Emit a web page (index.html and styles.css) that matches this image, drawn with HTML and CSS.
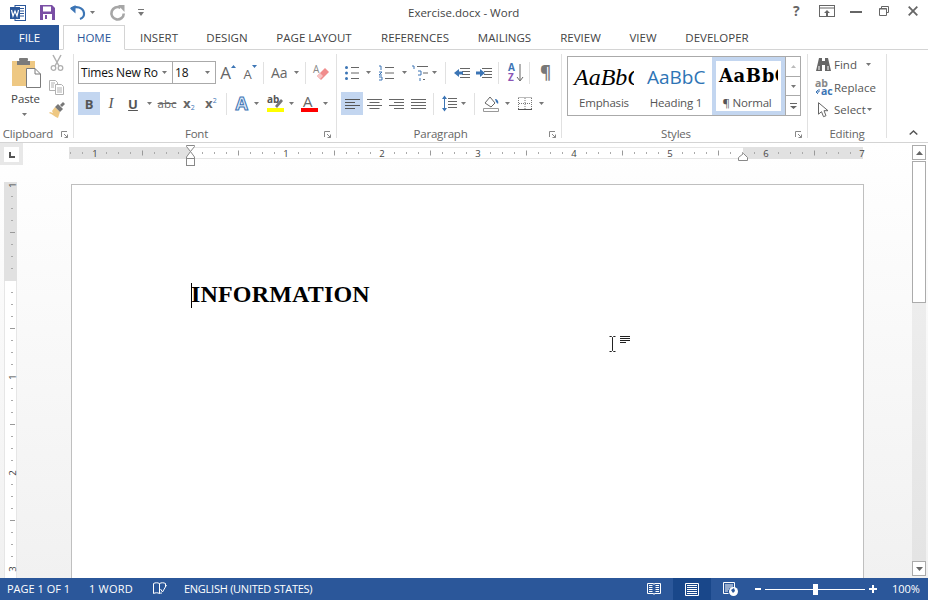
FILE: index.html
```html
<!DOCTYPE html>
<html lang="en">
<head>
<meta charset="utf-8">
<title>Exercise.docx - Word</title>
<link rel="stylesheet" href="styles.css">
</head>
<body>
<div class="app">
  <header class="titlebar">
    <div class="qat">
      <svg class="i16 m-l10" viewBox="0 0 16 16"><rect x="5" y="0.5" width="10.500" height="15" fill="#fff" stroke="#2b579a"/><path d="M9 3.500h5M9 6h5M9 8.500h5M9 11h5" stroke="#2b579a"/><rect x="0" y="2" width="10" height="12" fill="#2b579a"/><path d="M1.500 5l1.500 6 2-5 2 5 1.500-6" fill="none" stroke="#fff" stroke-width="1.200"/></svg>
      <svg class="i15 m-l14" viewBox="0 0 15 15"><path d="M0 0h12l3 3v12H0z" fill="#7a4fa5"/><rect x="3" y="1.500" width="8" height="5" fill="#fff"/><rect x="3" y="9" width="9" height="6" fill="#fff"/><rect x="5" y="10" width="2" height="4" fill="#7a4fa5"/></svg>
      <svg class="i15 m-l15" viewBox="0 0 15 15"><path d="M1 3.500C6 1 13 2 14 8c.3 2.500-1 5-4 6" fill="none" stroke="#3c75b5" stroke-width="2.200"/><path d="M0 3.500L5.500 0v8.500z" fill="#3c75b5"/></svg>
      <svg class="caret m-l5" viewBox="0 0 5 3"><path d="M0 0h5L2.500 3z"/></svg>
      <svg class="i15 m-l15" viewBox="0 0 15 15"><path d="M10.500 2.800A6.200 6.200 0 1 0 13.800 8.500" fill="none" stroke="#a6a6a6" stroke-width="2.600"/><path d="M8 0h6.500v7z" fill="#a6a6a6"/></svg>
      <svg class="customize m-l13" viewBox="0 0 6 7"><path d="M0 0h6v1H0zM0 3h6L3 7z" fill="#777"/></svg>
    </div>
    <div class="doc-title">Exercise.docx - Word</div>
    <div class="winctl">
      <span class="help">?</span>
      <svg class="ctl-display" viewBox="0 0 16 12"><rect x="0.500" y="0.500" width="15" height="11" fill="none" stroke="#666"/><path d="M1 3h14" stroke="#666"/><path d="M8 5l-3 3h2v3h2V8h2z" fill="#666"/></svg>
      <svg class="ctl-min" viewBox="0 0 12 2"><rect width="12" height="2" fill="#666"/></svg>
      <svg class="ctl-restore" viewBox="0 0 10 10"><path d="M2.500 2.500V.5h7v6h-2M.5 2.500h7v7h-7z" fill="none" stroke="#666"/><path d="M.5 3h7" stroke="#666"/></svg>
      <svg class="ctl-close" viewBox="0 0 10 10"><path d="M.7.7l8.600 8.600M9.300.7L.7 9.300" stroke="#666" stroke-width="1.800"/></svg>
    </div>
  </header>

  <nav class="tabs">
    <span class="tab file">FILE</span>
    <span class="tab home">HOME</span>
    <span class="tab">INSERT</span>
    <span class="tab">DESIGN</span>
    <span class="tab">PAGE LAYOUT</span>
    <span class="tab">REFERENCES</span>
    <span class="tab">MAILINGS</span>
    <span class="tab">REVIEW</span>
    <span class="tab">VIEW</span>
    <span class="tab">DEVELOPER</span>
  </nav>

  <section class="ribbon">
    <div class="group g-clip">
      <div class="tools clip-tools">
        <div class="paste">
          <svg class="paste-icon" viewBox="0 0 30 30"><path d="M1 3h23v25H1z" fill="#eec883"/><rect x="8" y="0" width="9" height="3" rx="1" fill="#7b7b7b"/><rect x="6" y="3" width="13" height="4" fill="#7b7b7b"/><path d="M15.500 10.500H24l5.500 5.500v13.500h-14z" fill="#fff" stroke="#7b7b7b"/><path d="M24 10.500v5.500h5.500" fill="none" stroke="#7b7b7b"/></svg>
          <span class="paste-label">Paste</span>
          <svg class="caret paste-caret" viewBox="0 0 5 3"><path d="M0 0h5L2.500 3z"/></svg>
        </div>
        <div class="clip-small">
          <svg class="i-cut" viewBox="0 0 14 16"><path d="M3 0l6 11M11 0L5 11" stroke="#b0b0b0" stroke-width="1.500" fill="none"/><circle cx="3.500" cy="13" r="2.300" fill="none" stroke="#b0b0b0" stroke-width="1.300"/><circle cx="10.500" cy="13" r="2.300" fill="none" stroke="#b0b0b0" stroke-width="1.300"/></svg>
          <svg class="i-copy" viewBox="0 0 15 15"><path d="M.5.500h6l2 2v8h-8z" fill="#fff" stroke="#b0b0b0"/><path d="M6.500 4.500h6l2 2v8h-8z" fill="#fff" stroke="#b0b0b0"/><path d="M2 3h4M2 5h3M2 7h3M8 8h5M8 10h5M8 12h5" stroke="#b0b0b0"/></svg>
          <svg class="i-paint" viewBox="0 0 16 16"><path d="M6 5l5 5-2 6c-3-1-6-4-9-5l1-1 3 1-1-2z" fill="#eec883"/><path d="M6 5l3-3 5 5-3 3z" fill="#777"/><path d="M11 3l3-3 2 2-3 3z" fill="#777"/></svg>
        </div>
      </div>
      <div class="glabel has-launcher">Clipboard<svg class="launcher" viewBox="0 0 7 7"><path d="M.5 6V.5H6M3 3l3.500 3.500M6.500 3.500v3h-3" fill="none" stroke="#888"/></svg></div>
    </div>

    <div class="group g-font">
      <div class="tools">
        <div class="row">
          <div class="combo w95"><span class="combo-text font-name">Times New Ro</span><svg class="caret" viewBox="0 0 5 3"><path d="M0 0h5L2.500 3z"/></svg></div>
          <div class="combo w44"><span class="combo-text size-val">18</span><svg class="caret" viewBox="0 0 5 3"><path d="M0 0h5L2.500 3z"/></svg></div>
          <span class="cell w24"><span class="grow-a big">A</span><svg class="tiny-up" viewBox="0 0 5 3"><path d="M0 3h5L2.500 0z"/></svg></span>
          <span class="cell w20"><span class="grow-a small">A</span><svg class="tiny-up" viewBox="0 0 5 3"><path d="M0 0h5L2.500 3z"/></svg></span>
          <span class="sep ml3 mr7"></span>
          <span class="aa">Aa</span>
          <svg class="caret ml3" viewBox="0 0 5 3"><path d="M0 0h5L2.500 3z"/></svg>
          <span class="sep ml6 mr7"></span>
          <svg class="i-eraser" viewBox="0 0 17 17"><path d="M8 16l8-8-4-4-8 8z" fill="#f08c8c"/><path d="M7 15l-3-3 3-3 3 3z" fill="#f7c4c4"/><text x="0" y="9" class="svg-a">A</text></svg>
        </div>
        <div class="row row2">
          <span class="cell w22 on b-btn">B</span>
          <span class="cell w22 i-btn">I</span>
          <span class="cell w22 u-btn">U</span>
          <svg class="caret ml3 mr5" viewBox="0 0 5 3"><path d="M0 0h5L2.500 3z"/></svg>
          <span class="abc">abc</span>
          <span class="xs ml6"><b>x</b><sub>2</sub></span>
          <span class="xs ml9"><b>x</b><sup>2</sup></span>
          <span class="sep ml8 mr8"></span>
          <svg class="i-texteffect" viewBox="0 0 16 17"><text x="0.500" y="15" class="svg-effect">A</text></svg>
          <svg class="caret ml3" viewBox="0 0 5 3"><path d="M0 0h5L2.500 3z"/></svg>
          <svg class="i-hl ml8" viewBox="0 0 17 17"><text x="0" y="8" class="svg-ab">ab</text><path d="M8 11l6-7 2 2-6 7z" fill="#777"/><rect y="13" width="17" height="4" fill="#ff0"/></svg>
          <svg class="caret ml5" viewBox="0 0 5 3"><path d="M0 0h5L2.500 3z"/></svg>
          <svg class="i-hl ml7" viewBox="0 0 17 17"><text x="2" y="12" class="svg-redA">A</text><rect y="13" width="17" height="4" fill="#f00"/></svg>
          <svg class="caret ml5" viewBox="0 0 5 3"><path d="M0 0h5L2.500 3z"/></svg>
        </div>
      </div>
      <div class="glabel has-launcher">Font<svg class="launcher" viewBox="0 0 7 7"><path d="M.5 6V.5H6M3 3l3.500 3.500M6.500 3.500v3h-3" fill="none" stroke="#888"/></svg></div>
    </div>

    <div class="group g-para">
      <div class="tools">
        <div class="row">
          <svg class="i-para ml8" viewBox="0 0 14 15"><g fill="#3c75b5"><circle cx="1.500" cy="2.500" r="1.500"/><circle cx="1.500" cy="8" r="1.500"/><circle cx="1.500" cy="13.500" r="1.500"/></g><path d="M6 2.500h8M6 8h8M6 13.500h8" stroke="#666"/></svg>
          <svg class="caret ml7" viewBox="0 0 5 3"><path d="M0 0h5L2.500 3z"/></svg>
          <svg class="i-para16 ml7" viewBox="0 0 16 16"><path d="M1 1h2v4M1 7h3L1 10h3M1 12h3v3H1" fill="none" stroke="#3c75b5"/><path d="M7 2.500h9M7 8h9M7 13.500h9" stroke="#666"/></svg>
          <svg class="caret ml8" viewBox="0 0 5 3"><path d="M0 0h5L2.500 3z"/></svg>
          <svg class="i-para17 ml4" viewBox="0 0 17 16"><path d="M1 1h2v3" fill="none" stroke="#3c75b5"/><path d="M6 1.500h11M12 8h5M12 14.500h2" stroke="#666"/><path d="M7 6h3v4H7M9 13v3" fill="none" stroke="#3c75b5"/></svg>
          <svg class="caret ml4" viewBox="0 0 5 3"><path d="M0 0h5L2.500 3z"/></svg>
          <span class="sep ml8 mr8"></span>
          <svg class="i-para16" viewBox="0 0 16 12"><path d="M6 1.500h10M8 4.500h8M8 7.500h8M6 10.500h10" stroke="#666"/><path d="M0 6l5-4v2.500h4v3H5V10z" fill="#3c75b5"/></svg>
          <svg class="i-para16 ml6" viewBox="0 0 16 12"><path d="M6 1.500h10M8 4.500h8M8 7.500h8M6 10.500h10" stroke="#666"/><path d="M9 6L4 2v2.500H0v3h4V10z" fill="#3c75b5"/></svg>
          <span class="sep ml6 mr9"></span>
          <svg class="i-sort" viewBox="0 0 15 19"><text x="0" y="8" class="svg-az blue">A</text><text x="0" y="17.500" class="svg-az purple">Z</text><path d="M12 1v16M9 14l3 4 3-4" fill="none" stroke="#666"/></svg>
          <span class="sep ml6 mr8"></span>
          <span class="pilcrow ml2">¶</span>
        </div>
        <div class="row row2">
          <span class="cell w22 ml4 on"><svg class="i-align" viewBox="0 0 15 12"><path d="M0 1.500h15M0 4.500h10M0 7.500h15M0 10.500h10" stroke="#555"/></svg></span>
          <span class="cell w22"><svg class="i-align" viewBox="0 0 15 12"><path d="M0 1.500h15M2.500 4.500h10M0 7.500h15M2.500 10.500h10" stroke="#666"/></svg></span>
          <span class="cell w22"><svg class="i-align" viewBox="0 0 15 12"><path d="M0 1.500h15M5 4.500h10M0 7.500h15M5 10.500h10" stroke="#666"/></svg></span>
          <span class="cell w22"><svg class="i-align" viewBox="0 0 15 12"><path d="M0 1.500h15M0 4.500h15M0 7.500h15M0 10.500h15" stroke="#666"/></svg></span>
          <span class="sep ml4 mr8"></span>
          <svg class="i-lines" viewBox="0 0 15 17"><path d="M6 3.500h9M6 6.500h9M6 9.500h9M6 12.500h9" stroke="#666"/><path d="M0 4l2.500-3.500L5 4zM0 13l2.500 3.500L5 13z" fill="#3c75b5"/><path d="M2.500 2v13" stroke="#3c75b5"/></svg>
          <svg class="caret ml4" viewBox="0 0 5 3"><path d="M0 0h5L2.500 3z"/></svg>
          <span class="sep ml8 mr8"></span>
          <svg class="i-para16h" viewBox="0 0 16 16"><path d="M2 7l5-6 5 6-4 4z" fill="#fff" stroke="#666"/><path d="M12 3c2 0 4 2 3 5l-2-2z" fill="#3c75b5"/><path d="M.5 12.500h15v3H.5z" fill="#fff" stroke="#999"/></svg>
          <svg class="caret ml6" viewBox="0 0 5 3"><path d="M0 0h5L2.500 3z"/></svg>
          <svg class="i-border ml8" viewBox="0 0 14 13"><path d="M.5 1v11M13.500 1v11M.5.500h13M7 1v11M1 6.500h12" stroke="#777" stroke-dasharray="1 1" fill="none"/><path d="M0 12.500h14" stroke="#555"/></svg>
          <svg class="caret ml7" viewBox="0 0 5 3"><path d="M0 0h5L2.500 3z"/></svg>
        </div>
      </div>
      <div class="glabel has-launcher">Paragraph<svg class="launcher" viewBox="0 0 7 7"><path d="M.5 6V.5H6M3 3l3.500 3.500M6.500 3.500v3h-3" fill="none" stroke="#888"/></svg></div>
    </div>

    <div class="group g-styles">
      <div class="gallery">
        <div class="style-item"><div class="preview p-em">AaBbC</div><div class="style-name">Emphasis</div></div>
        <div class="style-item"><div class="preview p-h1">AaBbC</div><div class="style-name">Heading 1</div></div>
        <div class="style-item selected"><div class="preview p-normal">AaBbC</div><div class="style-name">¶ Normal</div></div>
        <div class="gallery-scroll">
          <span class="gs-btn"><svg class="caret light" viewBox="0 0 5 3"><path d="M0 3h5L2.500 0z"/></svg></span>
          <span class="gs-btn"><svg class="caret" viewBox="0 0 5 3"><path d="M0 0h5L2.500 3z"/></svg></span>
          <span class="gs-btn"><svg class="more" viewBox="0 0 7 6"><path d="M0 0h7v1H0zM0 3h7L3.500 6z" fill="#666"/></svg></span>
        </div>
      </div>
      <div class="glabel has-launcher">Styles<svg class="launcher" viewBox="0 0 7 7"><path d="M.5 6V.5H6M3 3l3.500 3.500M6.500 3.500v3h-3" fill="none" stroke="#888"/></svg></div>
    </div>

    <div class="group g-edit">
      <div class="edit-list">
        <div class="edit-row"><span class="edit-ico"><svg class="i-bino" viewBox="0 0 15 13"><path d="M3 0h3v3h3V0h3l3 13H9V7H6v6H0z" fill="#666"/><path d="M3 8v4M12 8v4" stroke="#fff"/></svg></span><span>Find</span><svg class="caret ml9" viewBox="0 0 5 3"><path d="M0 0h5L2.500 3z"/></svg></div>
        <div class="edit-row"><span class="edit-ico"><svg class="i-repl" viewBox="0 0 17 15"><text x="0" y="7" class="svg-repl grey">ab</text><text x="6" y="14.500" class="svg-repl blue2">ac</text><path d="M4 9v3H1M3 10l-2 2 2 2" fill="none" stroke="#3c75b5"/></svg></span><span>Replace</span></div>
        <div class="edit-row"><span class="edit-ico"><svg class="i-sel" viewBox="0 0 11 15"><path d="M.5.700v11.500l3-2.500 2 5 2.500-1-2-5h4z" fill="#fff" stroke="#666"/></svg></span><span>Select</span><svg class="caret ml1" viewBox="0 0 5 3"><path d="M0 0h5L2.500 3z"/></svg></div>
      </div>
      <div class="glabel">Editing</div>
    </div>
    <div class="collapse"><svg class="chev" viewBox="0 0 9 5"><path d="M.7 4.500L4.500 1l3.800 3.500" fill="none" stroke="#555" stroke-width="1.500"/></svg></div>
  </section>

  <div class="main">
    <div class="doc-area">
      <div class="ruler-row">
        <span class="tab-stop"><span class="tab-stop-in"><svg class="l-stop" viewBox="0 0 6 6"><path d="M0 0h2v4h4v2H0z" fill="#555"/></svg></span></span>
        <svg class="hruler" viewBox="0 0 795 22" aria-label="ruler">
          <defs>
            <pattern id="ht" x="25" y="0" width="96" height="22" patternUnits="userSpaceOnUse">
              <path d="M12.500 9v2M24.500 9v2M36.500 9v2M60.500 9v2M72.500 9v2M84.500 9v2" stroke="#aaa"/>
              <path d="M48.500 7.500v5" stroke="#999"/>
            </pattern>
          </defs>
          <rect x="0" y="4" width="794" height="12" fill="#fff"/>
          <rect x="0" y="4" width="121" height="12" fill="#e1e1e1"/>
          <rect x="674" y="4" width="120" height="12" fill="#e1e1e1"/>
          <rect x="0" y="4" width="794" height="12" fill="url(#ht)"/>
          <path d="M121 4.500h553M121 15.500h553" stroke="#e6e6e6"/>
          <g class="rnum">
            <text x="26" y="13.500">1</text><text x="217" y="13.500">1</text><text x="313" y="13.500">2</text><text x="409" y="13.500">3</text><text x="505" y="13.500">4</text><text x="601" y="13.500">5</text><text x="697" y="13.500">6</text><text x="793" y="13.500">7</text>
          </g>
          <path d="M117.500 2.500h8v1l-4 5-4-5zM121.500 8.500l4 5.500v1.500h-8V14z" fill="#fff" stroke="#888"/>
          <rect x="117.500" y="15.500" width="8" height="7" fill="#fff" stroke="#888"/>
          <path d="M674.500 10.500l4 4v3h-9v-3z" fill="#fff" stroke="#888"/>
        </svg>
      </div>
      <div class="workspace">
        <div class="vruler-col">
          <svg class="vruler" viewBox="0 0 13 396" aria-label="ruler">
            <rect width="13" height="396" fill="#fff"/>
            <rect width="13" height="99" fill="#e1e1e1"/>
            <path d="M.5 99v297M12.500 99v297" stroke="#e6e6e6"/>
            <path d="M7 14.500h2M7 26.500h2M7 38.500h2M7 62.500h2M7 74.500h2M7 86.500h2M7 110.500h2M7 122.500h2M7 134.500h2M7 158.500h2M7 170.500h2M7 182.500h2M7 206.500h2M7 218.500h2M7 230.500h2M7 254.500h2M7 266.500h2M7 278.500h2M7 302.500h2M7 314.500h2M7 326.500h2M7 350.500h2M7 362.500h2M7 374.500h2" stroke="#aaa"/>
            <path d="M6 50.500h5M6 146.500h5M6 242.500h5M6 338.500h5" stroke="#999"/>
            <g class="rnum"><text transform="translate(11.500 3) rotate(-90)">1</text><text transform="translate(11.500 195) rotate(-90)">1</text><text transform="translate(11.500 291) rotate(-90)">2</text><text transform="translate(11.500 387) rotate(-90)">3</text></g>
          </svg>
        </div>
        <article class="page">
          <h1 class="doc-heading"><span class="caret-bar"></span>INFORMATION</h1>
        </article>
        <svg class="mouse" viewBox="0 0 21 16"><path d="M.5.500h2l1 1 1-1h2M.5 15.500h2l1-1 1 1h2M3.500 1.500v13" fill="none" stroke="#222"/><path d="M11 .5h10M11 2.500h10M11 4.500h10M11 6.500h6" stroke="#222"/></svg>
      </div>
    </div>
    <aside class="vscroll">
      <span class="sb-btn"><svg class="caret sb-arrow" viewBox="0 0 7 4"><path d="M0 4h7L3.500 0z"/></svg></span>
      <span class="sb-thumb"></span>
      <span class="sb-track"></span>
      <span class="sb-btn"><svg class="caret sb-arrow" viewBox="0 0 7 4"><path d="M0 0h7L3.500 4z"/></svg></span>
    </aside>
  </div>

  <footer class="status">
    <span class="st-page">PAGE 1 OF 1</span>
    <span class="st-word">1 WORD</span>
    <svg class="st-book" viewBox="0 0 14 14"><path d="M.5 1.500c2-1 4-1 6 0v10c-2-1-4-1-6 0zM6.500 1.500c2-1 4-1 6 0V5M6.500 11.500c1-.5 1.500-.5 2.500-.5" fill="none" stroke="#fff"/><path d="M7.500 7l2 3 4-7" fill="none" stroke="#fff"/></svg>
    <span class="st-lang">ENGLISH (UNITED STATES)</span>
    <span class="st-spacer"></span>
    <svg class="st-read" viewBox="0 0 14 14"><path d="M.5 1.500h6l.5 1 .5-1h6v10h-6L7 12.500 6.500 11.500h-6z" fill="none" stroke="#fff"/><path d="M2 3.500h3.500M2 5.500h3.500M2 7.500h3.500M2 9.500h3.500M8.500 3.500H12M8.500 5.500H12M8.500 7.500H12M8.500 9.500H12" stroke="#fff"/></svg>
    <span class="st-print"><svg class="st-print-i" viewBox="0 0 14 13"><path d="M.5.500h13v12H.5z" fill="none" stroke="#fff"/><path d="M2 2.500h10M2 4.500h10M2 6.500h10M2 8.500h10M2 10.500h10" stroke="#fff"/></svg></span>
    <svg class="st-web" viewBox="0 0 15 14"><path d="M.5.500h11v7M.5.500v11h5" fill="none" stroke="#fff"/><path d="M2 3h8M2 5h8M2 7h4M2 9h3" stroke="#fff"/><circle cx="10.500" cy="9.500" r="4.500" fill="#fff"/><path d="M8 8l3-2 1 3-2 2z" fill="#2b579a"/></svg>
    <span class="zoom-minus"></span>
    <span class="slider"><span class="slider-thumb"></span></span>
    <span class="zoom-plus"></span>
    <span class="st-zoom">100%</span>
  </footer>
</div>
</body>
</html>
```
FILE: styles.css
```css
* { box-sizing: border-box; }
html, body { margin: 0; padding: 0; }
body { width: 928px; height: 600px; overflow: hidden; background: #fff; font-family: "Open Sans", "Noto Sans", sans-serif; color: #444; font-size: 11.5px; }
svg { display: block; flex: none; overflow: visible; }
.app { width: 928px; height: 600px; display: flex; flex-direction: column; position: relative; }

.titlebar { height: 25px; flex: none; display: flex; align-items: center; position: relative; }
.qat { display: flex; align-items: center; }
.i16 { width: 16px; height: 16px; }
.i15 { width: 15px; height: 15px; }
.m-l10 { margin-left: 10px; }
.m-l14 { margin-left: 14px; }
.m-l15 { margin-left: 15px; }
.m-l5 { margin-left: 5px; }
.m-l13 { margin-left: 13px; }
.caret { width: 5px; height: 3px; fill: #777; }
.caret.light { fill: #bbb; }
.customize { width: 6px; height: 7px; }
.doc-title { position: absolute; left: 408px; top: 4px; width: 110px; text-align: center; font-size: 11.5px; line-height: 17px; white-space: nowrap; }
.winctl { margin-left: auto; display: flex; align-items: center; }
.help { position: absolute; left: 793px; top: 2px; font-weight: 700; font-size: 14px; line-height: 18px; color: #666; }
.ctl-display { position: absolute; left: 819px; top: 5px; width: 16px; height: 12px; }
.ctl-min { position: absolute; left: 850px; top: 11px; width: 12px; height: 2px; }
.ctl-restore { position: absolute; left: 879px; top: 6px; width: 10px; height: 10px; }
.ctl-close { position: absolute; left: 908px; top: 6px; width: 10px; height: 10px; }

.tabs { height: 25px; flex: none; display: grid; grid-template-columns: 59px 4px 62px 68px 68px 106px 96px 83px 69px 56px 92px 1fr; border-bottom: 1px solid #d4d4d4; font-size: 11.5px; }
.tab { display: flex; align-items: center; justify-content: center; height: 25px; white-space: nowrap; color: #444; }
.tab.file { background: #2b579a; color: #fff; grid-column: 1; }
.tab.home { grid-column: 3; color: #2b579a; background: #fff; border: 1px solid #d4d4d4; border-bottom: 1px solid #fff; }

.ribbon { height: 93px; flex: none; display: flex; border-bottom: 1px solid #d4d4d4; padding-top: 4px; position: relative; }
.group { flex: none; height: 84px; border-right: 1px solid #e1e1e1; position: relative; display: flex; flex-direction: column; }
.g-clip { width: 74px; }
.g-font { width: 263px; padding-left: 4px; }
.g-para { width: 225px; }
.g-styles { width: 246px; padding-left: 5px; }
.g-edit { width: 79px; }
.tools { height: 72px; padding-top: 7px; }
.glabel { position: absolute; left: 0; right: 0; bottom: -4px; height: 16px; text-align: center; line-height: 16px; color: #666; letter-spacing: -0.2px; }
.glabel.has-launcher { padding-right: 17px; }
.launcher { position: absolute; right: 5px; top: 5px; width: 7px; height: 7px; }

.clip-tools { display: flex; padding-top: 0; }
.paste { width: 49px; display: flex; flex-direction: column; align-items: center; padding-top: 4px; }
.paste-icon { width: 30px; height: 30px; margin-left: 3px; }
.paste-label { line-height: 16px; margin-top: 3px; margin-left: 2px; letter-spacing: -0.1px; }
.paste-caret { margin-top: 6px; }
.clip-small { display: flex; flex-direction: column; }
.i-cut { width: 14px; height: 16px; margin-top: 1px; margin-left: 1px; }
.i-copy { width: 15px; height: 15px; margin-top: 9px; }
.i-paint { width: 16px; height: 16px; margin-top: 7px; }

.row { display: flex; align-items: center; height: 23px; }
.row2 { margin-top: 8px; }
.cell { flex: none; height: 23px; display: flex; align-items: center; justify-content: center; position: relative; }
.w20 { width: 20px; }
.w22 { width: 22px; }
.w24 { width: 24px; }
.w44 { width: 44px; }
.w95 { width: 95px; }
.on { background: #c3d6f0; }
.sep { display: block; flex: none; width: 1px; height: 22px; background: #e1e1e1; }
.ml1 { margin-left: 1px; }
.ml2 { margin-left: 2px; }
.ml3 { margin-left: 3px; }
.ml4 { margin-left: 4px; }
.ml5 { margin-left: 5px; }
.ml6 { margin-left: 6px; }
.ml7 { margin-left: 7px; }
.ml8 { margin-left: 8px; }
.ml9 { margin-left: 9px; }
.mr5 { margin-right: 5px; }
.mr7 { margin-right: 7px; }
.mr8 { margin-right: 8px; }
.mr9 { margin-right: 9px; }

.combo { flex: none; height: 23px; border: 1px solid #aaa; display: flex; align-items: center; justify-content: space-between; padding: 0 5px 0 2px; background: #fff; margin-right: -1px; }
.combo-text { color: #111; line-height: 20px; }
.font-name { font-size: 12px; letter-spacing: -0.2px; }
.size-val { font-size: 12px; }
.w44.combo { margin-right: 0; width: 44px; }

.grow-a { font-weight: 400; color: #666; line-height: 1; }
.grow-a.big { font-size: 17px; }
.grow-a.small { font-size: 13px; margin-top: 3px; }
.tiny-up { width: 5px; height: 3px; fill: #3c75b5; margin-top: -13px; }
.aa { font-size: 14px; color: #666; width: 20px; }
.i-eraser { width: 17px; height: 17px; }
.svg-a { font: 10px "Open Sans", sans-serif; fill: #888; }
.b-btn { font-weight: 700; font-size: 13px; color: #555; }
.i-btn { font-family: "Liberation Serif", serif; font-style: italic; font-size: 15px; color: #555; }
.u-btn { font-weight: 700; font-size: 13px; color: #555; text-decoration: underline; }
.abc { width: 20px; font-size: 11.5px; color: #666; text-decoration: line-through; text-align: center; }
.xs { font-size: 13px; color: #666; display: flex; width: 13px; }
.xs b { font-weight: 700; font-family: "DejaVu Sans", sans-serif; font-size: 12px; }
.xs sub, .xs sup { font-size: 7px; color: #3c75b5; line-height: 1; }
.xs sub { align-self: flex-end; }
.xs sup { align-self: flex-start; }
.i-texteffect { width: 16px; height: 17px; }
.svg-effect { font: 700 18px "Open Sans", sans-serif; fill: #dfe9f5; stroke: #3c75b5; stroke-width: 1; }
.i-hl { width: 17px; height: 17px; }
.svg-ab { font: 700 10px "Open Sans", sans-serif; fill: #555; }
.svg-redA { font: 400 15px "Open Sans", sans-serif; fill: #666; }
.i-para { width: 14px; height: 15px; }
.i-para16 { width: 16px; height: 16px; }
.i-para17 { width: 17px; height: 16px; }
.i-sort { width: 15px; height: 19px; }
.svg-az { font: 700 10px "Open Sans", sans-serif; }
.svg-az.blue { fill: #3c75b5; }
.svg-az.purple { fill: #8a55b5; }
.pilcrow { font-size: 17px; font-weight: 700; color: #777; line-height: 1; }
.i-align { width: 15px; height: 12px; }
.i-lines { width: 15px; height: 17px; }
.i-para16h { width: 16px; height: 16px; }
.i-border { width: 14px; height: 13px; }

.gallery { margin-top: 2px; width: 234px; height: 60px; border: 1px solid #aaa; display: flex; }
.style-item { width: 72px; height: 58px; overflow: hidden; text-align: center; }
.style-item.selected { border: 4px solid #c3d6f0; margin-left: auto; height: 58px; width: 73px; }
.preview { height: 36px; overflow: hidden; white-space: nowrap; color: #000; text-align: left; }
.p-em { font: italic 24px/40px "Liberation Serif", serif; width: 66px; padding-left: 6px; }
.p-h1 { font-size: 19px; line-height: 41px; color: #2e74b5; padding-left: 7px; }
.p-normal { font: 700 18px/30px "DejaVu Serif", serif; letter-spacing: 0.6px; height: 28px; padding-left: 3px; width: 62px; }
.style-name { line-height: 16px; margin-top: 2px; color: #555; letter-spacing: -0.2px; }
.selected .style-name { margin-top: 6px; padding-right: 3px; }
.gallery-scroll { width: 15px; flex: none; border-left: 1px solid #aaa; display: flex; flex-direction: column; }
.gs-btn { flex: 1; display: flex; align-items: center; justify-content: center; border-bottom: 1px solid #aaa; }
.gs-btn:last-child { border-bottom: 0; }
.more { width: 7px; height: 6px; }

.edit-list { margin-top: -0.5px; }
.edit-row { height: 22.5px; display: flex; align-items: center; color: #555; white-space: nowrap; }
.edit-ico { width: 26px; display: flex; justify-content: center; padding-left: 4px; flex: none; }
.i-bino { width: 15px; height: 13px; }
.i-repl { width: 17px; height: 15px; }
.i-sel { width: 11px; height: 15px; }
.svg-repl { font: 700 10.5px "Open Sans", sans-serif; }
.svg-repl.grey { fill: #888; }
.svg-repl.blue2 { fill: #3c75b5; }
.collapse { position: absolute; left: 909px; top: 80px; }
.chev { width: 9px; height: 5px; }

.main { flex: 1; display: flex; min-height: 0; background: linear-gradient(#fff 0, #f1f1f1 100%); }
.doc-area { width: 911px; display: flex; flex-direction: column; }
.ruler-row { height: 22px; flex: none; display: flex; }
.tab-stop { width: 23px; height: 22px; background: #e8e8e8; padding: 4px 4px 3px; display: block; flex: none; }
.tab-stop-in { display: flex; width: 15px; height: 15px; background: #fff; align-items: center; justify-content: center; }
.l-stop { width: 6px; height: 6px; }
.hruler { width: 795px; height: 22px; margin-left: 46px; }
.rnum { font: 9.5px "Open Sans", sans-serif; fill: #444; text-anchor: middle; }
.workspace { flex: 1; display: flex; position: relative; min-height: 0; }
.vruler-col { width: 71px; flex: none; padding: 17px 0 0 4px; }
.vruler { width: 13px; height: 396px; }
.page { width: 793px; margin-top: 19px; background: #fff; border: 1px solid #bfbfbf; border-bottom: 0; padding: 96px 0 0 119px; flex: none; }
.doc-heading { margin: 0; font: 700 24px/27px "Liberation Serif", serif; color: #000; position: relative; letter-spacing: 0.18px; }
.caret-bar { position: absolute; left: 0; top: 2px; width: 1px; height: 25px; background: #000; }
.mouse { position: absolute; left: 609px; top: 171px; width: 21px; height: 16px; }

.vscroll { width: 17px; flex: none; padding: 2px 2px 2px 1px; display: flex; flex-direction: column; }
.sb-btn { width: 14px; height: 15px; flex: none; background: #fff; border: 1px solid #ababab; display: flex; align-items: center; justify-content: center; }
.sb-arrow { width: 7px; height: 4px; fill: #666; }
.sb-thumb { width: 14px; height: 142px; flex: none; margin-top: 1px; background: #fff; border: 1px solid #ababab; }
.sb-track { flex: 1; width: 14px; background: linear-gradient(#ededed, #e4e4e4); }

.status { height: 22px; flex: none; background: #2b579a; color: #fff; display: flex; align-items: center; white-space: nowrap; font-size: 11px; position: relative; }
.st-page { margin-left: 7px; width: 82px; padding-bottom: 2px; }
.st-word { width: 64px; padding-bottom: 2px; letter-spacing: 0.2px; }
.st-book { width: 14px; height: 14px; }
.st-lang { margin-left: 17px; padding-bottom: 2px; letter-spacing: -0.26px; }
.st-spacer { flex: 1; }
.st-read { width: 14px; height: 14px; }
.st-print { margin-left: 12px; width: 38px; height: 22px; background: #19478a; display: flex; align-items: center; justify-content: center; }
.st-print-i { width: 14px; height: 13px; }
.st-web { width: 15px; height: 14px; margin-left: 12px; }
.zoom-minus { width: 6px; height: 2px; background: #fff; margin-left: 17px; }
.slider { width: 100px; height: 1px; background: #fff; margin-left: 4px; position: relative; }
.slider-thumb { position: absolute; left: 48px; top: -5px; width: 5px; height: 11px; background: #fff; }
.zoom-plus { width: 8px; height: 8px; margin-left: 4px; background: linear-gradient(#fff, #fff) center/8px 2px no-repeat, linear-gradient(#fff, #fff) center/2px 8px no-repeat; }
.st-zoom { margin-left: 15px; margin-right: 9px; width: 27px; padding-bottom: 2px; }
```
